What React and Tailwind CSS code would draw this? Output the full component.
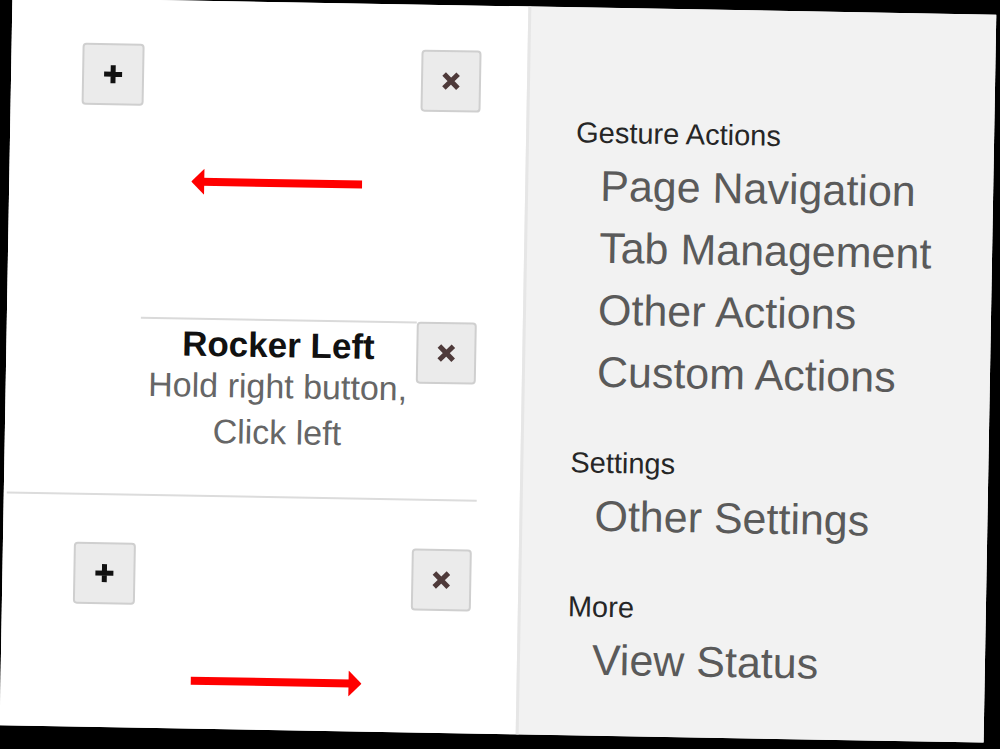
function PlusIcon() {
  return (
    <svg width="22" height="22" viewBox="0 0 22 22">
      <path d="M11 2v18M2 11h18" stroke="#111" strokeWidth="5" />
    </svg>
  );
}

function CloseIcon() {
  return (
    <svg width="20" height="20" viewBox="0 0 20 20">
      <path d="M3 3l14 14M17 3L3 17" stroke="#4e3a3a" strokeWidth="5" />
    </svg>
  );
}

function Arrow({ dir }) {
  return (
    <svg width="171" height="26" viewBox="0 0 171 26">
      {dir === "left" ? (
        <>
          <rect x="10" y="9" width="161" height="8" fill="#ff0000" />
          <polygon points="0,13 13,0 13,26" fill="#ff0000" />
        </>
      ) : (
        <>
          <rect x="0" y="9" width="160" height="8" fill="#ff0000" />
          <polygon points="171,13 158,0 158,26" fill="#ff0000" />
        </>
      )}
    </svg>
  );
}

function Btn({ children, className = "" }) {
  return (
    <div
      className={`flex items-center justify-center h-[62px] bg-[#ebebeb] border-2 border-[#cfcfcf] rounded-[4px] ${className}`}
    >
      {children}
    </div>
  );
}

function Section({ title, items, first }) {
  return (
    <div className={first ? "" : "mt-[42px]"}>
      <div className="text-[29px] leading-[36px] text-[#262626] mb-[4px]">{title}</div>
      <div className="pl-[25px]">
        {items.map((item) => (
          <div key={item} className="text-[43px] leading-[62px] text-[#5a5a5a] whitespace-nowrap">
            {item}
          </div>
        ))}
      </div>
    </div>
  );
}

export default function App() {
  return (
    <div className="w-[1000px] h-[749px] bg-black overflow-hidden pt-[6px] pl-[6px] font-['Liberation_Sans',Arial,sans-serif]">
      <div className="w-[984px] h-[728px] rotate-[1deg] flex bg-white">
        <div className="w-[516px] bg-white flex flex-col">
          <div className="h-[317px] pt-[44px]">
            <div className="flex items-start">
              <Btn className="ml-[71px] w-[62px]">
                <PlusIcon />
              </Btn>
              <Btn className="ml-[277px] mt-[1px] w-[60px]">
                <CloseIcon />
              </Btn>
            </div>
            <div className="ml-[182px] mt-[61px] w-[171px] h-[26px]">
              <Arrow dir="left" />
            </div>
          </div>

          <div className="h-[177px] flex items-start">
            <div className="ml-[134px] w-[276px] border-t-2 border-[#dadada] pt-[5px] text-center">
              <div className="text-[35px] leading-[37px] font-bold text-[#111]">Rocker Left</div>
              <div className="text-[34px] leading-[46px] text-[#666]">
                Hold right button,
                <br />
                Click left
              </div>
            </div>
            <Btn className="w-[60px]">
              <CloseIcon />
            </Btn>
          </div>
          <div className="ml-[3px] w-[470px] h-[2px] bg-[#dcdcdc]" />

          <div className="flex-1 pt-[47px]">
            <div className="flex items-start">
              <Btn className="ml-[71px] w-[62px]">
                <PlusIcon />
              </Btn>
              <Btn className="ml-[276px] mt-[1px] w-[60px]">
                <CloseIcon />
              </Btn>
            </div>
            <div className="ml-[190px] mt-[61px] w-[171px] h-[26px]">
              <Arrow dir="right" />
            </div>
          </div>
        </div>

        <div className="flex-1 border-l-[3px] border-[#e6e6e6] bg-[#f2f2f2] pt-[107px] pl-[47px]">
          <Section
            first
            title="Gesture Actions"
            items={["Page Navigation", "Tab Management", "Other Actions", "Custom Actions"]}
          />
          <Section title="Settings" items={["Other Settings"]} />
          <Section title="More" items={["View Status"]} />
        </div>
      </div>
    </div>
  );
}
